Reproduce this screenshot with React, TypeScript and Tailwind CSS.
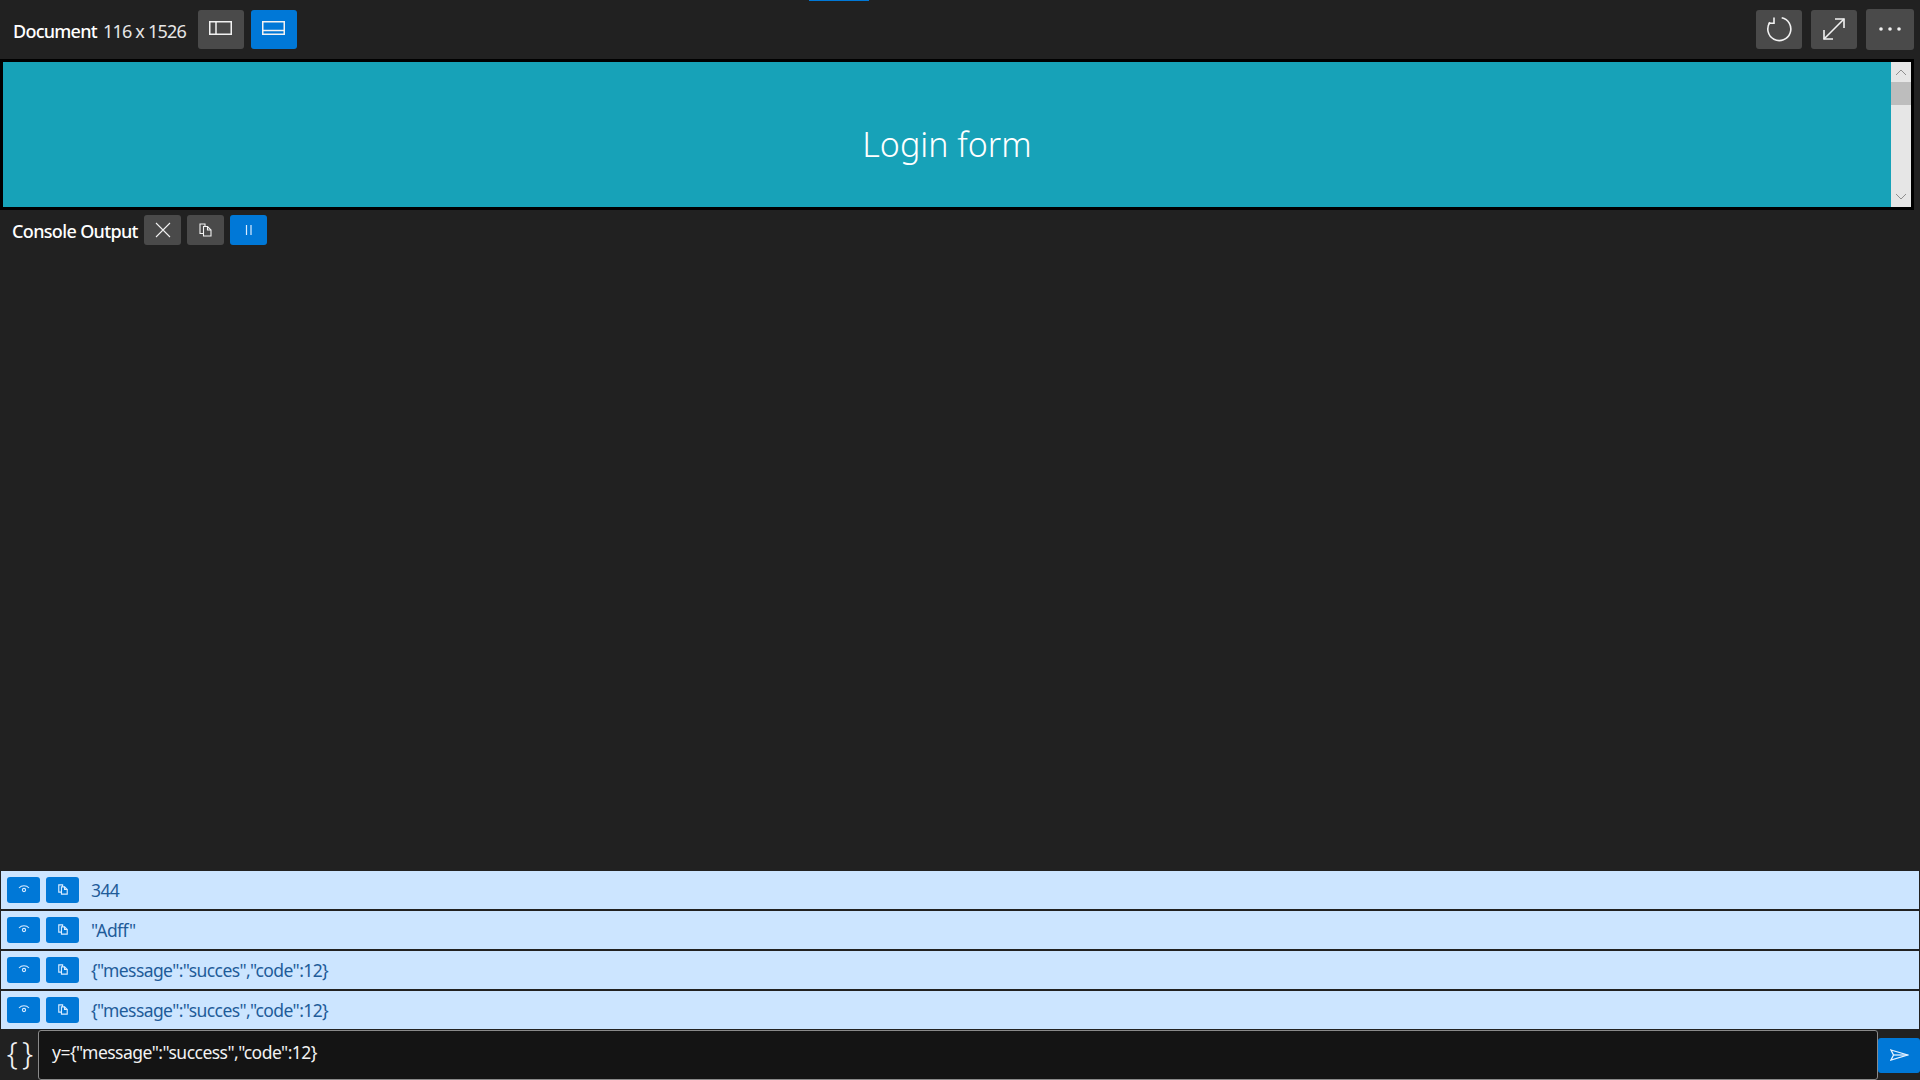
import React from 'react';

const ghostBtn = 'flex items-center justify-center rounded-[3px] bg-[#4a4a4a] text-white';
const blueBtn = 'flex items-center justify-center rounded-[3px] bg-[#0078d7] text-white';

const EyeIcon = () => (
  <svg className="mb-[3px]" width="12" height="9" viewBox="0 0 12 9" fill="none" stroke="#d9ecff" strokeWidth="1.1">
    <path d="M1 4C3.6 1 8.4 1 11 4" />
    <circle cx="6" cy="6" r="1.6" />
  </svg>
);

const CopyIcon = ({ w = 13, h = 14, sw = 1.1, color = '#d9ecff', className = '' }: { w?: number; h?: number; sw?: number; color?: string; className?: string }) => (
  <svg className={className} width={w} height={h} viewBox="0 0 13 14" fill="none" stroke={color} strokeWidth={sw}>
    <path d="M4.5 10.5H1V1H6V3.5" />
    <path d="M4.5 3.5H8.5L12 7V13H4.5Z" />
    <path d="M8.5 3.5V7H12" />
  </svg>
);

const logs = ['344', '"Adff"', '{"message":"succes","code":12}', '{"message":"succes","code":12}'];

export default function App() {
  return (
    <div className="flex h-[1080px] w-[1920px] flex-col overflow-hidden bg-[#212121] font-['Noto_Sans','Open_Sans',sans-serif] text-white">
      {/* Top toolbar */}
      <div className="relative flex h-[59px] shrink-0 items-center justify-between pl-[13px] pr-[6px]">
        <div className="absolute left-[809px] top-0 h-px w-[60px] bg-[#0078d7]" />
        <div className="flex items-center">
          <span className="mt-[3px] w-[90px] text-[18px] font-medium tracking-[-0.75px]">Document</span>
          <span className="mt-[3px] w-[85px] text-[18px] tracking-[-0.8px] text-[#e6e6e6]">116 x 1526</span>
          <button className={`${ghostBtn} ml-[10px] mt-[-1px] h-[39px] w-[46px]`}>
            <svg className="mb-[3px] mr-[1px]" width="23" height="14" viewBox="0 0 23 14" fill="none" stroke="#f2f2f2" strokeWidth="1.5">
              <rect x="0.75" y="0.75" width="21.5" height="12.5" />
              <path d="M7 1V13" />
            </svg>
          </button>
          <button className={`${blueBtn} ml-[7px] mt-[-1px] h-[39px] w-[46px]`}>
            <svg className="mb-[3px] mr-[1px]" width="23" height="14" viewBox="0 0 23 14" fill="none" stroke="#f2f2f2" strokeWidth="1.5">
              <rect x="0.75" y="0.75" width="21.5" height="12.5" />
              <path d="M1 9.5H22" />
            </svg>
          </button>
        </div>
        <div className="flex items-center gap-[9px]">
          <button className={`${ghostBtn} mt-[-1px] h-[39px] w-[46px]`}>
            <svg className="mb-[1px]" width="26" height="26" viewBox="0 0 26 26" fill="none" stroke="#f2f2f2" strokeWidth="1.6">
              <path d="M15.7 1.8A11.5 11.5 0 1 1 4 6.3" />
              <path d="M8 1.6V7.3H2.4" />
            </svg>
          </button>
          <button className={`${ghostBtn} mt-[-1px] h-[39px] w-[46px]`}>
            <svg width="22" height="22" viewBox="0 0 22 22" fill="none" stroke="#f2f2f2" strokeWidth="1.6">
              <path d="M1 21L21 1" />
              <path d="M12 1H21V10" />
              <path d="M1 12V21H10" />
            </svg>
          </button>
          <button className={`${ghostBtn} h-[41px] w-[48px]`}>
            <svg className="mb-[1px]" width="24" height="6" viewBox="0 0 24 6" fill="#f2f2f2">
              <circle cx="3" cy="3" r="1.8" />
              <circle cx="12" cy="3" r="1.8" />
              <circle cx="21" cy="3" r="1.8" />
            </svg>
          </button>
        </div>
      </div>

      {/* Preview frame */}
      <div className="flex h-[151px] w-[1914px] shrink-0 border-[3px] border-black">
        <div className="flex flex-1 items-center justify-center bg-[#17a2b8] pt-[19px] text-[34px] font-light text-white">
          Login form
        </div>
        <div className="flex w-[20px] flex-col bg-[#e6e6e6]">
          <div className="flex h-[20px] items-center justify-center">
            <svg width="12" height="8" viewBox="0 0 12 8" fill="none" stroke="#8f8f8f" strokeWidth="1"><path d="M1 7L6 2L11 7" /></svg>
          </div>
          <div className="h-[23px] bg-[#bdbdbd]" />
          <div className="flex-1" />
          <div className="flex h-[20px] items-center justify-center">
            <svg width="12" height="8" viewBox="0 0 12 8" fill="none" stroke="#8f8f8f" strokeWidth="1"><path d="M1 1L6 6L11 1" /></svg>
          </div>
        </div>
      </div>

      {/* Console header */}
      <div className="flex h-[40px] shrink-0 items-center pl-[12px]">
        <span className="mt-[2px] w-[132px] text-[18px] font-medium tracking-[-0.65px]">Console Output</span>
        <button className={`${ghostBtn} h-[30px] w-[37px]`}>
          <svg className="mb-[1px]" width="16" height="16" viewBox="0 0 16 16" fill="none" stroke="#f2f2f2" strokeWidth="1.1"><path d="M1 1L15 15M15 1L1 15" /></svg>
        </button>
        <button className={`${ghostBtn} ml-[6px] h-[30px] w-[37px]`}>
          <CopyIcon color="#f2f2f2" className="mb-[1px]" />
        </button>
        <button className={`${blueBtn} ml-[6px] h-[30px] w-[37px]`}>
          <svg className="mb-[1px]" width="8" height="12" viewBox="0 0 8 12" fill="none" stroke="#d9ecff" strokeWidth="1.2"><path d="M1.5 1V11M6 1V11" /></svg>
        </button>
      </div>

      <div className="flex-1" />

      {/* Log rows */}
      <div className="flex shrink-0 flex-col">
        {logs.map((line, i) => (
          <div key={i} className="flex h-[40px] items-center border border-[#212121] bg-[#cce5ff] pl-[6px]">
            <button className={`${blueBtn} h-[26px] w-[33px]`}>
              <EyeIcon />
            </button>
            <button className={`${blueBtn} ml-[6px] h-[26px] w-[33px]`}>
              <CopyIcon w={10} h={11} sw={1.5} className="mb-[2px]" />
            </button>
            <span className="ml-[12px] mt-[1px] text-[17.5px] tracking-[-0.6px] text-[#1f5c99]">{line}</span>
          </div>
        ))}
      </div>

      {/* Input row */}
      <div className="flex h-[50px] shrink-0 items-center">
        <div className="flex w-[38px] justify-center pb-[6px] text-[31px] font-light leading-none tracking-[-2px] text-[#f2f2f2]">{'{ }'}</div>
        <div className="flex h-full flex-1 items-center rounded-[3px] border border-[#8a8a8a] bg-[#141414] pb-[5px] pl-[13px] text-[17.5px] tracking-[-0.53px] text-[#f2f2f2]">
          y={'{'}"message":"success","code":12{'}'}
        </div>
        <button className={`${blueBtn} h-[35px] w-[42px]`}>
          <svg className="mb-[1px]" width="19" height="12" viewBox="0 0 19 12" fill="none" stroke="#e6f2ff" strokeWidth="1.3">
            <path d="M1 1L17.5 6L1 11L3.5 6Z" />
            <path d="M3.5 6H17.5" />
          </svg>
        </button>
      </div>
    </div>
  );
}
